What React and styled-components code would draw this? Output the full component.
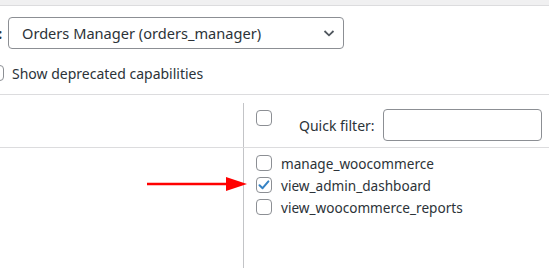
import React from "react"
import styled, { createGlobalStyle } from "styled-components"

const Global = createGlobalStyle`
  html, body {
    margin: 0;
    padding: 0;
    background: #fff;
  }
  body {
    font-family: "Noto Sans", "Open Sans", sans-serif;
    color: #2c3338;
  }
`

const Page = styled.div`
  position: relative;
  width: 549px;
  height: 268px;
  overflow: hidden;
  background: #fff;
`

const TopBand = styled.div`
  height: 5px;
  background: #f0f0f1;
  border-bottom: 1px solid #dcdcde;
`

const RoleRow = styled.div`
  display: flex;
  align-items: center;
  margin-top: 11px;
  height: 32px;
`

const Colon = styled.span`
  width: 8px;
  font-size: 15px;
  font-weight: 700;
  line-height: 1;
  margin-left: -2px;
  margin-right: 2px;
`

const Select = styled.div`
  box-sizing: border-box;
  display: flex;
  align-items: center;
  justify-content: space-between;
  width: 336px;
  height: 32px;
  padding: 0 7px 0 13px;
  border: 1px solid #8c8f94;
  border-radius: 4px;
  font-size: 14.6px;
  color: #2c3338;
`

const DeprecatedRow = styled.label`
  display: flex;
  align-items: center;
  gap: 8px;
  margin-top: 10px;
  margin-left: -12px;
  height: 28px;
  font-size: 14px;
`

const Table = styled.div`
  margin-top: 7px;
  border-top: 1px solid #dcdcde;
  display: grid;
  grid-template-columns: 243px 1fr;
`

const HeadLeft = styled.div`
  height: 52px;
  border-bottom: 1px solid #dcdcde;
`

const HeadRight = styled.div`
  height: 52px;
  border-bottom: 1px solid #dcdcde;
  display: flex;
  flex-direction: column;
`

const HeadCell = styled.div`
  margin-top: 8px;
  flex: 1;
  border-left: 1px solid #c3c4c7;
  display: flex;
  align-items: flex-start;
  padding: 7px 0 0 12px;
`

const FilterLabel = styled.span`
  margin-left: 27px;
  margin-top: 6px;
  font-size: 14px;
  color: #2c3338;
`

const FilterInput = styled.div`
  box-sizing: border-box;
  width: 159px;
  height: 32px;
  margin-left: 8px;
  margin-top: -1px;
  border: 1px solid #8c8f94;
  border-radius: 4px;
`

const BodyLeft = styled.div`
  height: 130px;
`

const BodyRight = styled.div`
  border-left: 1px solid #c3c4c7;
  padding: 4px 0 0 12px;
  display: flex;
  flex-direction: column;
`

const CapRow = styled.label`
  display: flex;
  align-items: center;
  gap: 9px;
  height: 22px;
  font-size: 13.6px;
  color: #2c3338;
`

const Box = styled.span`
  box-sizing: border-box;
  width: 16px;
  height: 16px;
  flex: none;
  border: 1px solid #8c8f94;
  border-radius: 4px;
  background: #fff;
  display: flex;
  align-items: center;
  justify-content: center;
`

const Arrow = styled.svg`
  position: absolute;
  left: 146px;
  top: 176px;
`

const Check = ({ checked }) => (
  <Box>
    {checked && (
      <svg width="14" height="14" viewBox="0 0 14 14">
        <path d="M2.5 7.2 L5.6 10.2 L11.4 3.4" fill="none" stroke="#3582c4" strokeWidth="2" strokeLinecap="round" strokeLinejoin="round" />
      </svg>
    )}
  </Box>
)

const Chevron = () => (
  <svg width="14" height="14" viewBox="0 0 14 14">
    <path d="M2.5 5 L7 9.3 L11.5 5" fill="none" stroke="#50575e" strokeWidth="1.8" />
  </svg>
)

const caps = [
  { name: "manage_woocommerce", checked: false },
  { name: "view_admin_dashboard", checked: true },
  { name: "view_woocommerce_reports", checked: false },
]

export default function App() {
  return (
    <Page>
      <Global />
      <TopBand />
      <RoleRow>
        <Colon>:</Colon>
        <Select>
          Orders Manager (orders_manager)
          <Chevron />
        </Select>
      </RoleRow>
      <DeprecatedRow>
        <Check />
        Show deprecated capabilities
      </DeprecatedRow>
      <Table>
        <HeadLeft />
        <HeadRight>
          <HeadCell>
            <Check />
            <FilterLabel>Quick filter:</FilterLabel>
            <FilterInput />
          </HeadCell>
        </HeadRight>
        <BodyLeft />
        <BodyRight>
          {caps.map(c => (
            <CapRow key={c.name}>
              <Check checked={c.checked} />
              {c.name}
            </CapRow>
          ))}
        </BodyRight>
      </Table>
      <Arrow width="102" height="16" viewBox="0 0 102 16">
        <line x1="1" y1="8" x2="82" y2="8" stroke="#f00" strokeWidth="2.4" />
        <polygon points="80,1 101,8 80,15" fill="#f00" />
      </Arrow>
    </Page>
  )
}
